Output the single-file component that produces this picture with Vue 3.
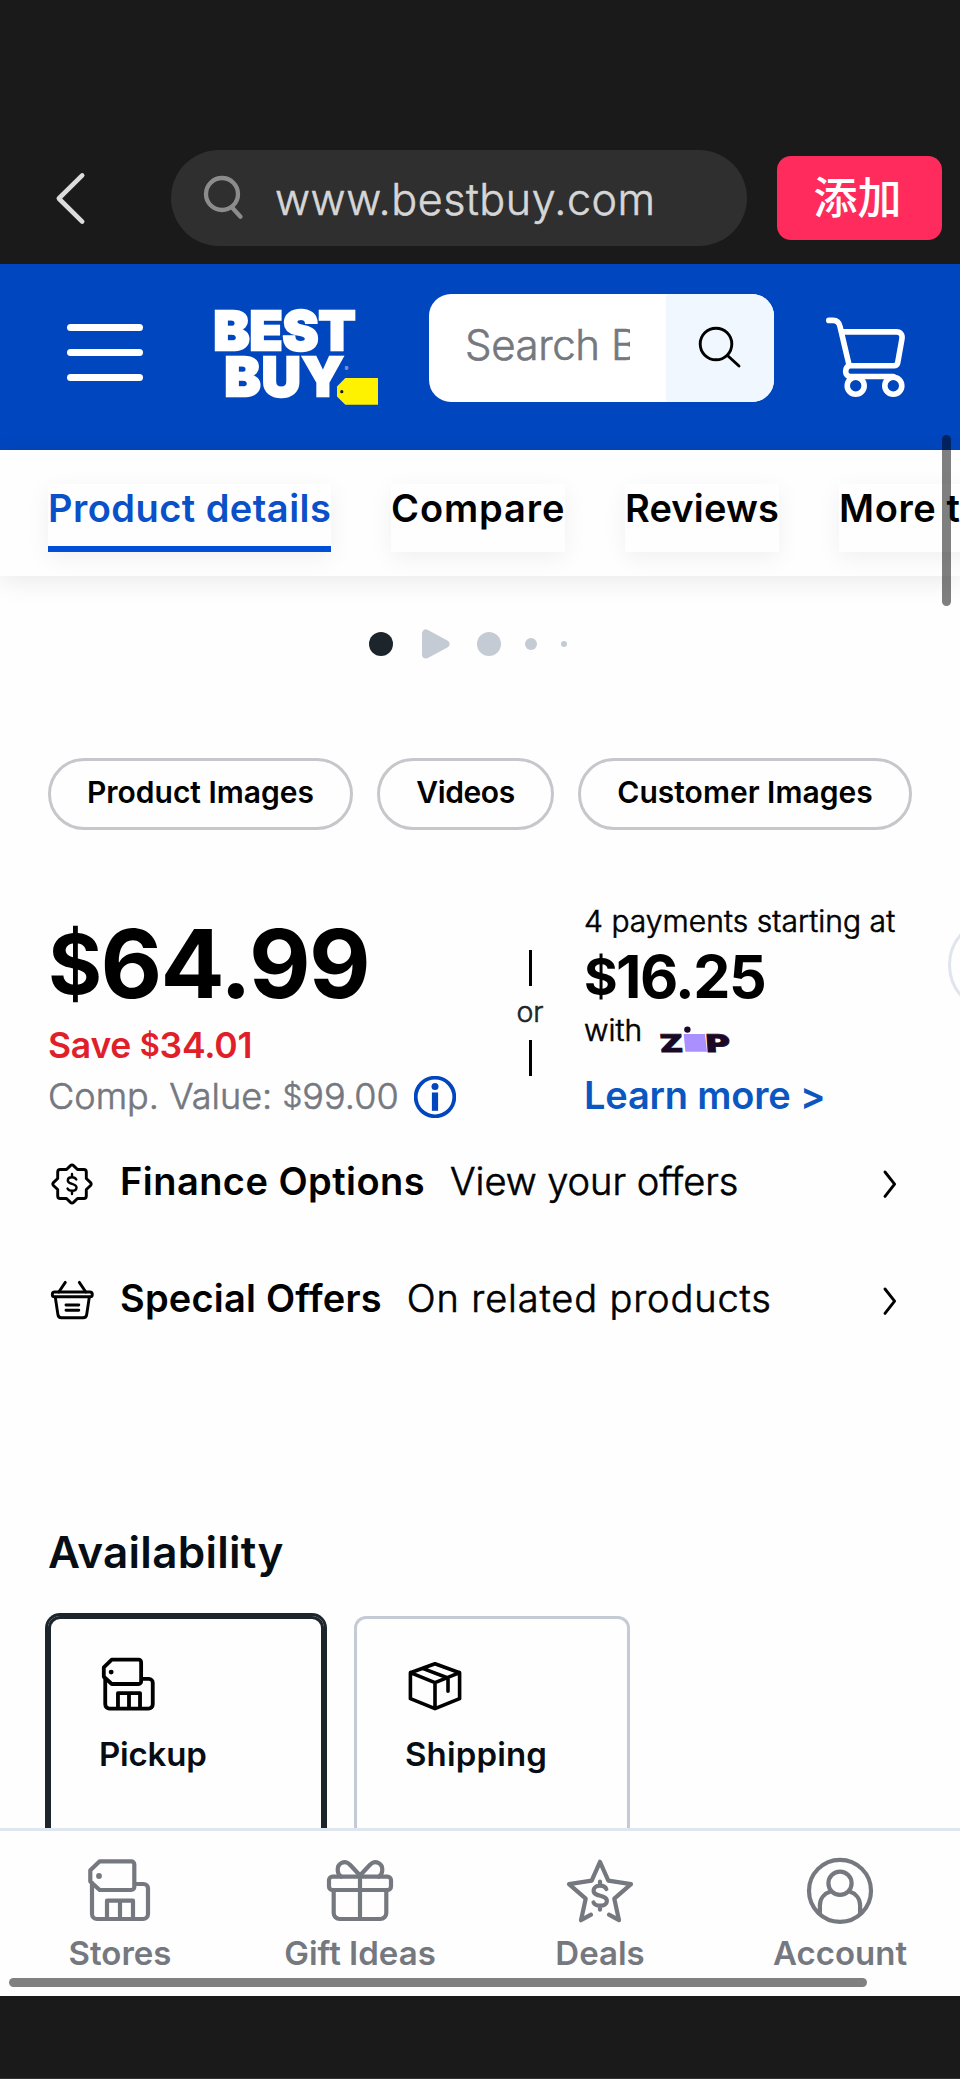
<script setup>
const tabs = [
  { label: 'Product details', cls: 'tab-details', active: true },
  { label: 'Compare', cls: 'tab-compare' },
  { label: 'Reviews', cls: 'tab-reviews' },
  { label: 'More to explore', cls: 'tab-more' },
]
const filters = [
  { label: 'Product Images', cls: 'f-product' },
  { label: 'Videos', cls: 'f-videos' },
  { label: 'Customer Images', cls: 'f-customer' },
]
</script>

<template>
  <div class="screen">
    <div class="browser-bar">
      <svg class="back" viewBox="0 0 32 54" fill="none" stroke="#dcdcdc" stroke-width="4.6" stroke-linecap="round" stroke-linejoin="round">
        <path d="M28.2 4.400L4.800 27.500 28.200 50.600" />
      </svg>
      <div class="address">
        <svg class="address-icon" viewBox="0 0 44 46" fill="none" stroke="#8c8c8c" stroke-width="4.300" stroke-linecap="round">
          <circle cx="20" cy="19" r="16" />
          <path d="M30.300 32.700l8.200 9" />
        </svg>
        <span class="url thin">www.bestbuy.com</span>
      </div>
      <button class="add">添加</button>
    </div>

    <header class="site-header">
      <div class="menu"><i></i><i></i><i></i></div>
      <svg class="logo" viewBox="0 0 172 102">
        <g fill="#fff" stroke="#fff" stroke-width="2.400" stroke-linejoin="miter" class="logo-text">
          <text x="3.400" y="44.800">BEST</text>
          <text x="14.400" y="90.800" letter-spacing="1.200">BUY</text>
        </g>
        <text x="134.500" y="65.500" fill="#b7cdf0" class="reg">®</text>
        <path d="M135.300 73H168v26.700h-32.700L127 91.500v-10z" fill="#fff200" />
        <circle cx="131.800" cy="86.700" r="1.600" fill="#111" />
      </svg>
      <div class="search">
        <div class="search-field"><span class="search-text thin">Search Best Buy</span></div>
        <div class="search-btn">
          <svg viewBox="0 0 48 48" fill="none" stroke="#000" stroke-width="2.900" stroke-linecap="round">
            <circle cx="20" cy="20" r="15.800" />
            <path d="M31.500 31.500l11.500 10.500" />
          </svg>
        </div>
      </div>
      <svg class="cart" viewBox="0 0 82 84" fill="none" stroke="#fff" stroke-width="5.600" stroke-linecap="round" stroke-linejoin="round">
        <path d="M2.800 4.400h4.400c4 0 6 2.300 6.900 6.400L23.200 49.700H68c2.200 0 3.200-1 3.700-3l4.200-23.400c.9-4.600-1.400-7.400-5.400-7.400H15.700M23.200 49.700c-4.700 2-4.700 9.400 0 10.800h44.100" />
        <circle cx="29.700" cy="69.700" r="8.500" />
        <circle cx="67.300" cy="69.700" r="8.500" />
      </svg>
    </header>

    <nav class="tabs">
      <a v-for="t in tabs" :key="t.label" class="tab" :class="[t.cls, { active: t.active }]">{{ t.label }}</a>
    </nav>

    <main class="content">
      <div class="dots">
        <i class="dot dark"></i>
        <svg class="play" viewBox="0 0 28 30"><path d="M4 4.500v21L23.500 15z" fill="#c5cbd5" stroke="#c5cbd5" stroke-width="8" stroke-linejoin="round" /></svg>
        <i class="dot"></i>
        <i class="dot mid"></i>
        <i class="dot tiny"></i>
      </div>

      <div class="filters">
        <button v-for="f in filters" :key="f.label" class="filter" :class="f.cls">{{ f.label }}</button>
      </div>

      <section class="pricing">
        <div class="price-col">
          <div class="price"><span class="cur">$</span>64.99</div>
          <div class="save">Save <span class="cur">$</span>34.01</div>
          <div class="comp thin">
            <span>Comp. Value: <span class="cur">$</span>99.00</span>
            <svg class="info" viewBox="0 0 42 42">
              <circle cx="21" cy="21" r="19.300" fill="none" stroke="#0046be" stroke-width="3.800" />
              <circle cx="21" cy="10.600" r="3.500" fill="#0046be" />
              <path d="M21 16.500v18.300" stroke="#0046be" stroke-width="6.200" />
            </svg>
          </div>
        </div>
        <div class="divider thin"><i></i><span>or</span><i></i></div>
        <div class="pay-col">
          <div class="pay-small thin">4 payments starting at</div>
          <div class="pay-price"><span class="cur">$</span>16.25</div>
          <div class="with thin">
            <span>with</span>
            <svg class="zip" viewBox="0 0 74 32">
              <g fill="#1a0826" stroke="#1a0826" stroke-width=".8" class="zip-text">
                <text transform="translate(-.2 27.600) skewX(4)" x="2.400" y="0" textLength="23.500" lengthAdjust="spacingAndGlyphs">Z</text>
                <text transform="translate(-.2 27.600) skewX(4)" x="48.800" y="0" textLength="24" lengthAdjust="spacingAndGlyphs">P</text>
              </g>
              <path d="M25.700 10H47l2 17.800H27.400z" fill="#aa8fff" />
              <circle cx="29.400" cy="5.600" r="3.200" fill="#1a0826" />
            </svg>
          </div>
          <a class="learn">Learn more &gt;</a>
        </div>
        <div class="next-circle"></div>
      </section>

      <div class="offer finance">
        <svg class="offer-icon" viewBox="0 0 48 48" fill="none" stroke="#000" stroke-width="2.900" stroke-linecap="round" stroke-linejoin="round">
          <path d="M18.500 12.500l4-3.900a2 2 0 0 1 3 0l4 3.900h6.300a2.500 2.500 0 0 1 2.500 2.500v6.500l4.300 4.100a2 2 0 0 1 0 2.900l-4.300 4V39a2.500 2.500 0 0 1-2.500 2.500h-6.300l-4 3.900a2 2 0 0 1-3 0l-4-3.900h-6.300A2.500 2.500 0 0 1 9.700 39v-6.500l-4.300-4a2 2 0 0 1 0-2.900l4.300-4.100V15a2.500 2.500 0 0 1 2.500-2.500z" />
          <path stroke-width="2.400" d="M24 17v3.200M24 33.800v3.200M28.300 22.500c-.8-1.600-2.300-2.300-4.300-2.300-2.500 0-4.200 1.200-4.200 3.200 0 4.300 8.700 2.500 8.700 7.100 0 2-1.900 3.300-4.500 3.300-2.100 0-3.700-.7-4.500-2.300" />
        </svg>
        <strong>Finance Options</strong>
        <span class="thin">View your offers</span>
        <svg class="chev" viewBox="0 0 16 48" fill="none" stroke="#000" stroke-width="2.900" stroke-linecap="round" stroke-linejoin="round"><path d="M3 15l9.600 12.200L3 39.400" /></svg>
      </div>
      <div class="offer special">
        <svg class="offer-icon" viewBox="0 0 48 48" fill="none" stroke="#000" stroke-width="2.900" stroke-linecap="round" stroke-linejoin="round">
          <rect x="4.300" y="18" width="40" height="4.800" rx="2.400" />
          <path d="M17.300 8.400L10.800 18M31.300 8.400l6.500 9.600M7.300 23.300l2.600 17.200c.3 2.200 1.500 3.300 3.600 3.300h21.600c2.100 0 3.300-1.100 3.600-3.300l2.600-17.200M18 31h12.800M18 36.300h12.800" />
        </svg>
        <strong>Special Offers</strong>
        <span class="thin">On related products</span>
        <svg class="chev" viewBox="0 0 16 48" fill="none" stroke="#000" stroke-width="2.900" stroke-linecap="round" stroke-linejoin="round"><path d="M3 15l9.600 12.200L3 39.400" /></svg>
      </div>

      <h2 class="avail">Availability</h2>
      <div class="cards">
        <div class="card selected">
          <svg class="card-icon store" viewBox="0 0 66 66" fill="none" stroke="#000" stroke-width="4.500" stroke-linejoin="round">
            <path d="M12.700 4.300h31.600a3 3 0 0 1 3 3V30a3 3 0 0 1-3 3H12.700l-9.400-8.500V13.300z" />
            <path d="M5 26v31a5 5 0 0 0 5 5h46a5 5 0 0 0 5-5V31.500a4.500 4.500 0 0 0-4.500-4.500H48M20 62V43.700h26V62M33 44v18" />
            <circle cx="12" cy="19" r="2.900" fill="#000" stroke="none" />
          </svg>
          <span class="pick">Pickup</span>
        </div>
        <div class="card">
          <svg class="card-icon box" viewBox="0 0 60 56" fill="none" stroke="#000" stroke-width="3.600" stroke-linejoin="round" stroke-linecap="round">
            <path d="M30 7.700l24.600 9v26L30 52.700l-24.600-10v-26zM5.400 16.700l24.600 10 24.600-10M30 26.700v26M17.600 12.400l25.400 9.600v13.200" />
          </svg>
          <span class="ship">Shipping</span>
        </div>
      </div>
    </main>

    <nav class="bottom-nav">
      <a>
        <svg viewBox="0 0 66 66"><path d="M12.700 4.300h31.600a3 3 0 0 1 3 3V30a3 3 0 0 1-3 3H12.700l-9.400-8.500V13.300z" /><path d="M5 26v31a5 5 0 0 0 5 5h46a5 5 0 0 0 5-5V31.500a4.500 4.500 0 0 0-4.500-4.500H48M20 62V43.700h26V62M33 44v18" /><circle cx="12" cy="19" r="2.900" fill="#75787f" stroke="none" /></svg>
        <span>Stores</span>
      </a>
      <a>
        <svg viewBox="0 0 66 66"><rect x="2" y="19.700" width="62" height="13.300" rx="3.500" /><path d="M6.700 33v23a6 6 0 0 0 6 6h40.600a6 6 0 0 0 6-6V33M33 18v44M33 18.500L23.500 8.300C17.500 2 10.500 6.500 10.700 13c.1 3.300 1.300 5.300 3.500 6.700M33 18.500L42.500 8.300C48.500 2 55.500 6.500 55.300 13c-.1 3.300-1.300 5.300-3.500 6.700" /></svg>
        <span>Gift Ideas</span>
      </a>
      <a>
        <svg viewBox="0 0 66 66"><path d="M24 57.700l-10 5.500 4.700-21.500L2 27.200l22.700-3.500L33 4.800l8.300 18.900L64 27.200 47.300 41.700 52 63.200l-10-5.500" /><path d="M33 24.700v4M33 48.700v4M39.300 32c-1-2.300-3.300-3.300-6.300-3.300-3.900 0-6.400 1.900-6.400 5 0 6.500 13.300 3.700 13.300 10.200 0 3.100-2.800 4.800-6.900 4.800-3.100 0-5.500-.9-6.500-3.200" /></svg>
        <span>Deals</span>
      </a>
      <a>
        <svg viewBox="0 0 66 66"><circle cx="33" cy="33.800" r="31" /><circle cx="33" cy="26.300" r="11.600" /><path d="M12.900 57V48.500c0-6.800 4.300-12 10.600-13.900M53.100 57V48.500c0-6.800-4.300-12-10.600-13.900" /></svg>
        <span>Account</span>
      </a>
    </nav>
    <div class="system-bar"></div>

    <div class="scroll-v"></div>
    <div class="scroll-h"></div>
  </div>
</template>

<style>
html, body { background: #1a1a1a; }
</style>

<style scoped>
.screen {
  position: relative;
  width: 960px;
  height: 2079px;
  overflow: hidden;
  background: #fefefe;
  font-family: Inter, "Liberation Sans", "Noto Sans CJK SC", sans-serif;
  color: #000;
  white-space: nowrap;
}
.screen * { box-sizing: border-box; }
svg { display: block; flex: none; }
button { font-family: inherit; color: inherit; padding: 0; border: 0; background: none; }
.thin { font-weight: 300; -webkit-text-stroke: .6px currentColor; }
.thin svg { -webkit-text-stroke: 0; }

.browser-bar { height: 264px; padding: 150px 0 18px 54px; display: flex; align-items: center; background: #1a1a1a; }
.back { width: 32px; height: 54px; }
.address { margin-left: 85px; width: 576px; height: 96px; border-radius: 48px; background: #2f2f2f; display: flex; align-items: center; padding-left: 31px; }
.address-icon { width: 44px; height: 46px; }
.url { margin-left: 29px; font-size: 43px; line-height: 60px; padding-top: 1px; letter-spacing: .55px; color: #d6d6d6; }
.add { margin-left: 30px; width: 165px; height: 84px; border-radius: 14px; background: #ff2b5c; color: #fff; font: 500 44px/78px "Noto Sans CJK SC", sans-serif; padding: 0 4px 6px 0; }

.site-header { height: 186px; background: #0046be; display: flex; align-items: flex-start; padding-left: 67px; }
.menu { display: flex; flex-direction: column; gap: 18px; margin-top: 60px; }
.menu i { width: 76px; height: 7px; border-radius: 4px; background: #fff; }
.logo { margin: 41px 0 0 67px; width: 172px; height: 102px; overflow: visible; }
.logo-text { font: 900 54px Inter, sans-serif; }
.reg { font: 6px Inter, sans-serif; }
.search { margin: 30px 0 0 47px; width: 345px; height: 108px; border-radius: 22px; overflow: hidden; display: flex; background: #fff; }
.search-field { width: 237px; padding: 0 36px; display: flex; align-items: center; }
.search-text { width: 165px; overflow: hidden; font-size: 42px; letter-spacing: -.4px; line-height: 60px; padding-bottom: 6px; color: #75787f; }
.search-btn { width: 108px; background: #f0f7ff; padding: 30px; }
.search-btn svg { width: 48px; height: 48px; }
.cart { margin: 52px 0 0 52px; width: 82px; height: 84px; }

.tabs { position: relative; height: 126px; padding: 34px 0 0 48px; display: flex; align-items: flex-start; gap: 60px; background: #fefefe; box-shadow: 0 6px 24px rgba(0, 0, 0, .08); }
.tab { flex: none; height: 68px; font-size: 38px; line-height: 48px; font-weight: 600; background: #fefefe; box-shadow: 0 6px 24px rgba(0, 0, 0, .06); }
.tab.active { color: #0a50c8; border-bottom: 6px solid #004fd6; }
.tab-details { width: 283px; letter-spacing: .46px; }
.tab-compare { width: 174px; letter-spacing: .9px; }
.tab-reviews { width: 154px; letter-spacing: .15px; }
.tab-more { letter-spacing: .6px; }

.content { height: 1252px; overflow: hidden; padding-top: 53px; }
.dots { height: 30px; padding-left: 369px; display: flex; align-items: center; }
.dot { width: 24px; height: 24px; border-radius: 50%; background: #c5cbd5; margin-left: 27px; }
.dot.dark { margin-left: 0; background: #1d252c; }
.play { width: 28px; height: 30px; margin-left: 29px; }
.dot.mid { width: 12px; height: 12px; margin-left: 24px; }
.dot.tiny { width: 6px; height: 6px; margin-left: 24px; }

.filters { margin-top: 99px; padding-left: 48px; display: flex; gap: 24px; }
.filter { height: 72px; border: 3px solid #c5c7cb; border-radius: 36px; font-size: 30px; font-weight: 600; line-height: 62px; padding-bottom: 4px; }
.f-product { width: 305px; }
.f-videos { width: 177px; letter-spacing: -.4px; }
.f-customer { width: 334px; }

.pricing { position: relative; height: 327px; padding: 73px 0 0 48px; display: flex; align-items: flex-start; overflow: hidden; }
.cur { font-size: .87em; line-height: 0; vertical-align: .05em; }
.price-col { width: 464px; padding-top: 13px; }
.price { font-size: 95px; line-height: 96px; font-weight: 700; letter-spacing: -1.6px; }
.save { margin-top: 8px; font-size: 35.5px; line-height: 51px; font-weight: 600; letter-spacing: -.25px; color: #e01f2a; }
.comp { display: flex; align-items: center; font-size: 36px; line-height: 51px; letter-spacing: .05px; color: #75787f; }
.comp > span { width: 366px; }
.info { width: 42px; height: 42px; }
.divider { width: 36px; padding-top: 47px; display: flex; flex-direction: column; align-items: center; font-size: 28.5px; line-height: 50px; color: #1d252c; }
.divider i { width: 3px; height: 36px; background: #000; }
.divider span { padding: 1px 0 3px; }
.pay-col { margin-left: 36px; }
.pay-small { font-size: 30px; line-height: 36px; letter-spacing: .05px; }
.pay-price { margin-top: 7.5px; font-size: 59px; line-height: 60px; font-weight: 700; letter-spacing: -1.5px; }
.with { margin-top: 5px; height: 36px; display: flex; font-size: 30px; line-height: 36px; }
.with > span { width: 74px; }
.zip { margin-top: 12px; width: 74px; height: 32px; }
.zip-text { font: 900 24.5px Inter, sans-serif; }
.learn { display: block; margin-top: 23px; font-size: 38px; line-height: 48px; font-weight: 600; letter-spacing: -.19px; color: #0a57c2; }
.next-circle { position: absolute; left: 948px; top: 87px; width: 96px; height: 96px; border: 3px solid #e0e4ec; border-radius: 50%; }

.offer { height: 48px; padding: 0 62px 0 48px; display: flex; align-items: center; font-size: 38px; line-height: 48px; }
.offer-icon { width: 48px; height: 48px; margin-right: 24px; }
.offer strong { font-weight: 600; margin-right: 25px; }
.finance strong { letter-spacing: .45px; }
.finance span { letter-spacing: -.05px; }
.special { margin-top: 69px; }
.special strong { letter-spacing: .2px; }
.special span { letter-spacing: .85px; }
.chev { margin-left: auto; width: 16px; height: 48px; }

.avail { margin: 202px 0 0 48px; font-size: 44px; line-height: 56px; font-weight: 600; letter-spacing: .27px; color: #060d14; }
.cards { margin-top: 36px; padding-left: 48px; display: flex; gap: 30px; }
.card { width: 276px; height: 300px; border: 3px solid #c5cbd5; border-radius: 12px; padding: 37px 0 0 48px; }
.card.selected { border-color: #1d252c; box-shadow: 0 0 0 3px #1d252c; }
.card-icon { height: 56px; }
.store { width: 56px; margin-left: 2px; }
.box { width: 60px; }
.card span { display: block; margin-top: 22px; font-size: 33px; line-height: 40px; font-weight: 600; color: #060d14; }
.card .pick { letter-spacing: -.2px; }
.card .ship { letter-spacing: .15px; }

.bottom-nav { height: 168px; border-top: 3px solid #e0e6ef; background: #fefefe; display: flex; padding-top: 26px; }
.bottom-nav a { width: 240px; display: flex; flex-direction: column; align-items: center; gap: 10px; font-size: 33px; line-height: 40px; font-weight: 600; color: #75787f; }
.bottom-nav svg { width: 66px; height: 66px; overflow: visible; fill: none; stroke: #75787f; stroke-width: 4.2; stroke-linecap: round; stroke-linejoin: round; }
.system-bar { height: 83px; background: #1a1a1a; border-bottom: 1px solid #333; }
.scroll-v { position: absolute; left: 942px; top: 435px; width: 9px; height: 171px; border-radius: 5px; background: rgba(0, 0, 0, .5); }
.scroll-h { position: absolute; left: 9px; top: 1978px; width: 858px; height: 9px; border-radius: 5px; background: #808080; }
</style>
